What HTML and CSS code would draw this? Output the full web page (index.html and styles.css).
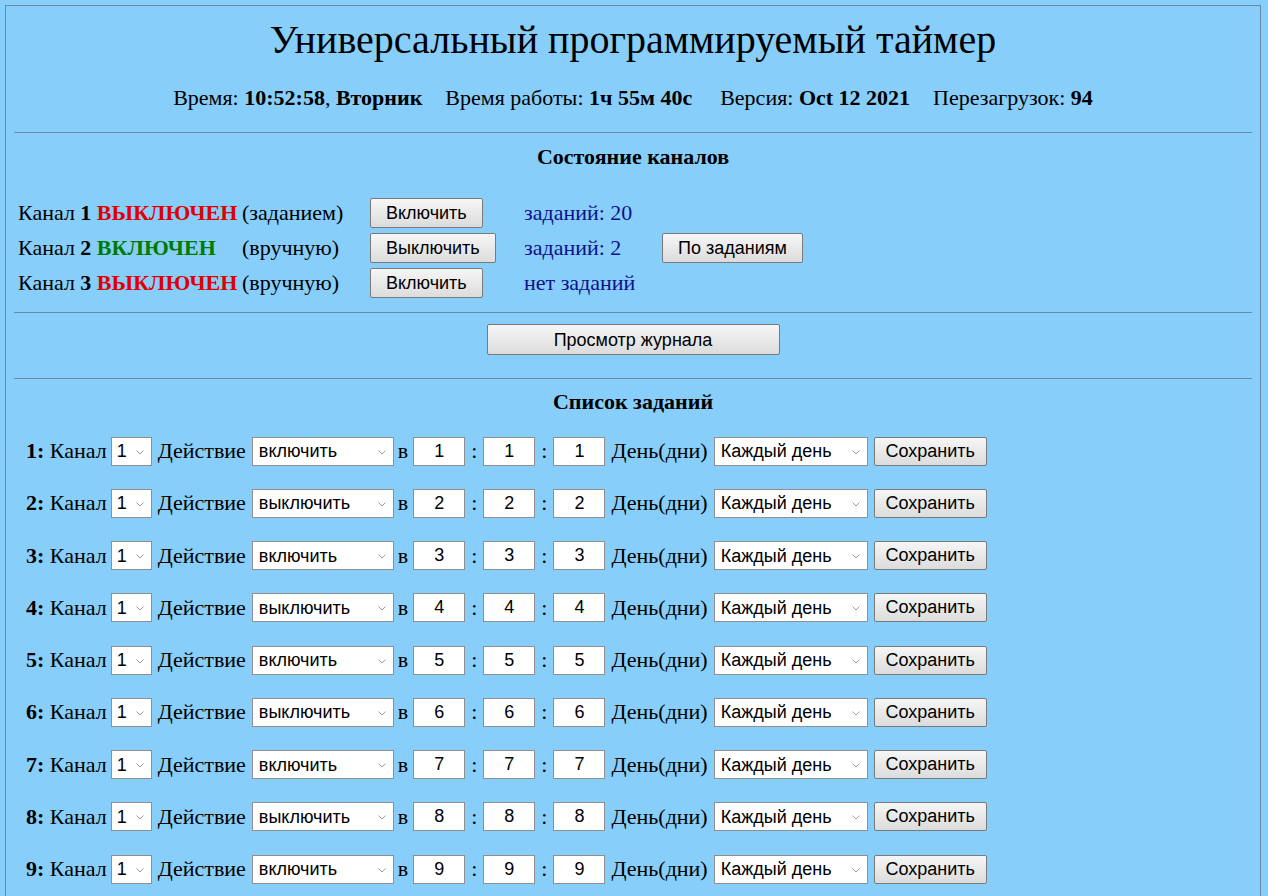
FILE: index.html
```html
<!DOCTYPE html>
<html lang="ru">
<head>
<meta charset="utf-8">
<title>Универсальный программируемый таймер</title>
<link rel="stylesheet" href="styles.css">
</head>
<body>
<div class="page">
  <h1 class="title">Универсальный программируемый таймер</h1>
  <div class="info">
    <span>Время: <b>10:52:58</b>, <b>Вторник</b></span>
    <span class="extra">Время работы: <b>1ч 55м 40с</b></span>
    <span>Версия: <b>Oct 12 2021</b></span>
    <span>Перезагрузок: <b>94</b></span>
  </div>
  <hr class="sep">
  <h2 class="section">Состояние каналов</h2>
  <div class="channels">
    <div class="ch-name">Канал <b>1</b> <b class="off">ВЫКЛЮЧЕН</b></div>
    <div class="ch-mode">(заданием)</div>
    <div><button class="btn">Включить</button></div>
    <div class="ch-tasks">заданий: 20</div>
    <div></div>

    <div class="ch-name">Канал <b>2</b> <b class="on">ВКЛЮЧЕН</b></div>
    <div class="ch-mode">(вручную)</div>
    <div><button class="btn">Выключить</button></div>
    <div class="ch-tasks">заданий: 2</div>
    <div><button class="btn">По заданиям</button></div>

    <div class="ch-name">Канал <b>3</b> <b class="off">ВЫКЛЮЧЕН</b></div>
    <div class="ch-mode">(вручную)</div>
    <div><button class="btn">Включить</button></div>
    <div class="ch-tasks">нет заданий</div>
    <div></div>
  </div>
  <hr class="sep sep-ch">
  <div class="journal"><button class="btn btn-journal">Просмотр журнала</button></div>
  <hr class="sep sep-j">
  <h2 class="section section-tasks">Список заданий</h2>
  <div class="tasks" id="tasks"></div>
</div>
<script src="app.js"></script>
</body>
</html>
```

FILE: app.js
```js
(function () {
  var host = document.getElementById('tasks');
  var chev = '<svg class="chev" width="8" height="5" viewBox="0 0 8 5"><path d="M0.5 0.5 L4 4 L7.5 0.5" fill="none" stroke="#9a9a9a" stroke-width="1"/></svg>';
  var html = '';
  for (var i = 1; i <= 20; i++) {
    html +=
      '<div class="task">' +
        '<span class="lbl lbl-first"><b>' + i + ':</b> Канал</span>' +
        '<span class="sel sel-ch"><select><option>1</option><option>2</option><option>3</option></select>' + chev + '</span>' +
        '<span class="lbl">Действие</span>' +
        '<span class="sel sel-act"><select><option' + (i % 2 === 1 ? ' selected' : '') + '>включить</option><option' + (i % 2 === 0 ? ' selected' : '') + '>выключить</option></select>' + chev + '</span>' +
        '<span class="lbl lbl-v">в</span>' +
        '<input class="num" type="text" value="' + i + '">' +
        '<span class="lbl colon">:</span>' +
        '<input class="num" type="text" value="' + i + '">' +
        '<span class="lbl colon">:</span>' +
        '<input class="num" type="text" value="' + i + '">' +
        '<span class="lbl">День(дни)</span>' +
        '<span class="sel sel-day"><select><option>Каждый день</option></select>' + chev + '</span>' +
        '<button class="btn btn-save">Сохранить</button>' +
      '</div>';
  }
  host.innerHTML = html;
})();
```

FILE: styles.css
```css
html, body {
  margin: 0;
  padding: 0;
  background: #87cefa;
}

body {
  font-family: "Liberation Serif", "Times New Roman", serif;
  font-size: 22px;
  color: #000;
}

.page {
  margin: 5px 7px 5px 5px;
  border: 1px solid #6a8aa5;
  padding: 0 8px 40px 8px;
}

.title {
  margin: 10px 0 0 0;
  font-size: 40px;
  line-height: 47px;
  font-weight: normal;
  text-align: center;
}

.info {
  margin-top: 22px;
  line-height: 26px;
  display: flex;
  justify-content: center;
  gap: 23px;
  white-space: nowrap;
}

.info .extra {
  margin-right: 5px;
}

.sep {
  border: 0;
  border-top: 1px solid #6a8aa5;
  height: 0;
  margin: 21px 0 0 0;
}

.section {
  margin: 11px 0 0 0;
  font-size: 22px;
  line-height: 26px;
  text-align: center;
  font-weight: bold;
}

.channels {
  margin: 25px 0 0 4px;
  display: grid;
  grid-template-columns: 224px 128px 154px 138px auto;
  grid-auto-rows: 35px;
  align-items: center;
  white-space: nowrap;
}

.off { color: #e00000; }
.on { color: #007a00; }

.ch-tasks { color: #10108c; }

.btn {
  font-family: "Liberation Sans", Arial, sans-serif;
  font-size: 18px;
  height: 30px;
  padding: 0 15px;
  color: #000;
  background: linear-gradient(#f6f6f6, #dcdcdc);
  border: 1px solid #7a7a7a;
  border-radius: 2px;
  box-sizing: border-box;
  line-height: 28px;
}

.sep-ch { margin-top: 12px; }

.journal {
  margin-top: 11px;
  display: flex;
  justify-content: center;
}

.btn-journal {
  width: 293px;
  height: 31px;
}

.sep-j { margin-top: 23px; }

.section-tasks { margin-top: 10px; }

.tasks {
  margin: 21px 0 0 12px;
  display: flex;
  flex-direction: column;
  gap: 22.25px;
}

.task {
  display: flex;
  align-items: center;
  gap: 6px;
  height: 30px;
  white-space: nowrap;
}

.lbl { line-height: 26px; }
.lbl-first { margin-right: -2px; }
.lbl-v { margin: 0 -1px 0 -2px; }

.sel {
  position: relative;
  display: inline-block;
  height: 29px;
}

.sel select {
  appearance: none;
  -webkit-appearance: none;
  font-family: "Liberation Sans", Arial, sans-serif;
  font-size: 18px;
  height: 29px;
  width: 100%;
  box-sizing: border-box;
  border: 1px solid #8f8f8f;
  background: #fff;
  color: #000;
  padding: 0 0 0 6px;
  margin: 0;
  border-radius: 0;
}

.sel .chev {
  position: absolute;
  right: 8px;
  top: 13px;
  pointer-events: none;
}

.sel-ch { width: 41px; }
.sel-ch select { padding-left: 5px; }
.sel-act { width: 142px; }
.sel-day { width: 154px; }

.num {
  font-family: "Liberation Sans", Arial, sans-serif;
  font-size: 18px;
  width: 52px;
  height: 29px;
  box-sizing: border-box;
  border: 1px solid #8f8f8f;
  background: #fff;
  text-align: center;
  padding: 0;
  margin: 0;
  border-radius: 0;
}

.btn-save {
  width: 113px;
  height: 29px;
  padding: 0;
  line-height: 27px;
}
```
